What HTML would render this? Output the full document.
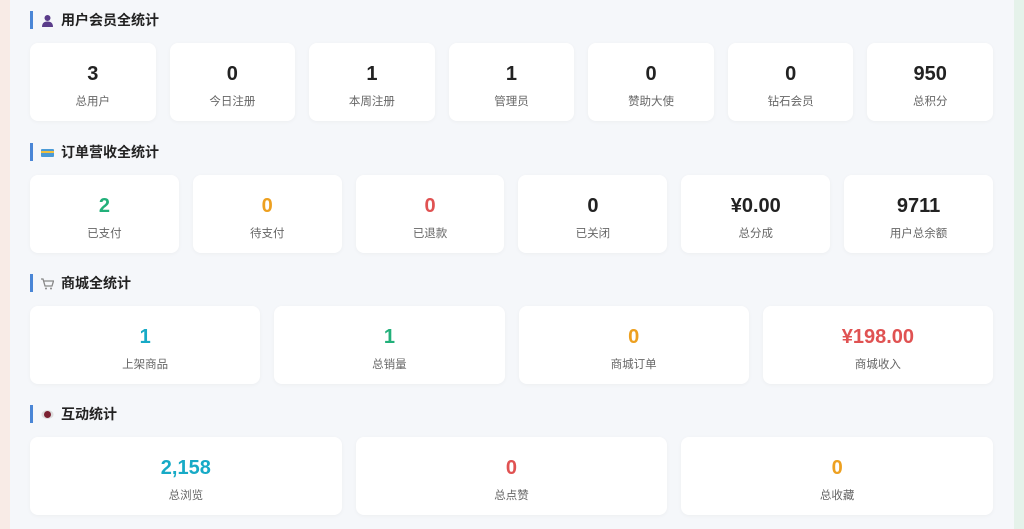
<!DOCTYPE html>
<html><head><meta charset="utf-8"><style>
*{margin:0;padding:0;box-sizing:border-box}
body{width:1024px;height:529px;overflow:hidden;background:linear-gradient(90deg,#f8ebe6 0,#f8ebe6 10px,#f5f7fa 10px,#f5f7fa 1014px,#e5f2ea 1014px);font-family:"Liberation Sans","Noto Sans CJK SC",sans-serif;position:relative}
.t{position:absolute;left:30px;height:18px;border-left:3px solid #4a86d6;padding-left:8px;font-size:14px;font-weight:bold;color:#222;line-height:18px;display:flex;align-items:center;gap:7px}
.ic{width:13px;height:13px;display:inline-block}
.g{position:absolute;left:30px;width:963px;display:grid;gap:14px}
.c{background:#fff;border-radius:8px;height:78px;text-align:center;box-shadow:0 1px 4px rgba(0,0,0,.04)}
.n{font-size:20px;font-weight:bold;color:#222;padding-top:19px;line-height:24px}
.l{font-size:11.5px;color:#666;margin-top:7px}
.gr{color:#22b07a}.or{color:#eda020}.rd{color:#e05252}.tl{color:#17aac6}
</style></head><body>
<div class="t" style="top:11px"><svg class="ic" viewBox="0 0 13 13"><circle cx="6.5" cy="4" r="3" fill="#5a3c8a"/><path d="M1 13 Q1 7.5 6.5 7.5 Q12 7.5 12 13Z" fill="#5a3c8a"/></svg>用户会员全统计</div>
<div class="g" style="top:43px;grid-template-columns:repeat(7,1fr)">
<div class="c"><div class="n">3</div><div class="l">总用户</div></div>
<div class="c"><div class="n">0</div><div class="l">今日注册</div></div>
<div class="c"><div class="n">1</div><div class="l">本周注册</div></div>
<div class="c"><div class="n">1</div><div class="l">管理员</div></div>
<div class="c"><div class="n">0</div><div class="l">赞助大使</div></div>
<div class="c"><div class="n">0</div><div class="l">钻石会员</div></div>
<div class="c"><div class="n">950</div><div class="l">总积分</div></div>
</div>
<div class="t" style="top:143px"><svg class="ic" viewBox="0 0 13 13"><rect x="0" y="3" width="13" height="8" rx="1" fill="#4a9ad6"/><rect x="0" y="5" width="13" height="2" fill="#f0c040"/></svg>订单营收全统计</div>
<div class="g" style="top:175px;grid-template-columns:repeat(6,1fr)">
<div class="c"><div class="n gr">2</div><div class="l">已支付</div></div>
<div class="c"><div class="n or">0</div><div class="l">待支付</div></div>
<div class="c"><div class="n rd">0</div><div class="l">已退款</div></div>
<div class="c"><div class="n">0</div><div class="l">已关闭</div></div>
<div class="c"><div class="n">¥0.00</div><div class="l">总分成</div></div>
<div class="c"><div class="n">9711</div><div class="l">用户总余额</div></div>
</div>
<div class="t" style="top:274px"><svg class="ic" viewBox="0 0 13 13"><path d="M0 2h2l2 7h7l1.5-5H3" stroke="#888" stroke-width="1.3" fill="none"/><circle cx="5" cy="11.5" r="1" fill="#888"/><circle cx="10" cy="11.5" r="1" fill="#888"/></svg>商城全统计</div>
<div class="g" style="top:306px;grid-template-columns:repeat(4,1fr)">
<div class="c"><div class="n tl">1</div><div class="l">上架商品</div></div>
<div class="c"><div class="n gr">1</div><div class="l">总销量</div></div>
<div class="c"><div class="n or">0</div><div class="l">商城订单</div></div>
<div class="c"><div class="n rd">¥198.00</div><div class="l">商城收入</div></div>
</div>
<div class="t" style="top:405px"><svg class="ic" viewBox="0 0 13 13"><ellipse cx="6.5" cy="6.5" rx="6" ry="4.5" fill="#ddd"/><circle cx="6.5" cy="6.5" r="3.5" fill="#7a2030"/></svg>互动统计</div>
<div class="g" style="top:437px;grid-template-columns:repeat(3,1fr)">
<div class="c"><div class="n tl">2,158</div><div class="l">总浏览</div></div>
<div class="c"><div class="n rd">0</div><div class="l">总点赞</div></div>
<div class="c"><div class="n or">0</div><div class="l">总收藏</div></div>
</div>
</body></html>
